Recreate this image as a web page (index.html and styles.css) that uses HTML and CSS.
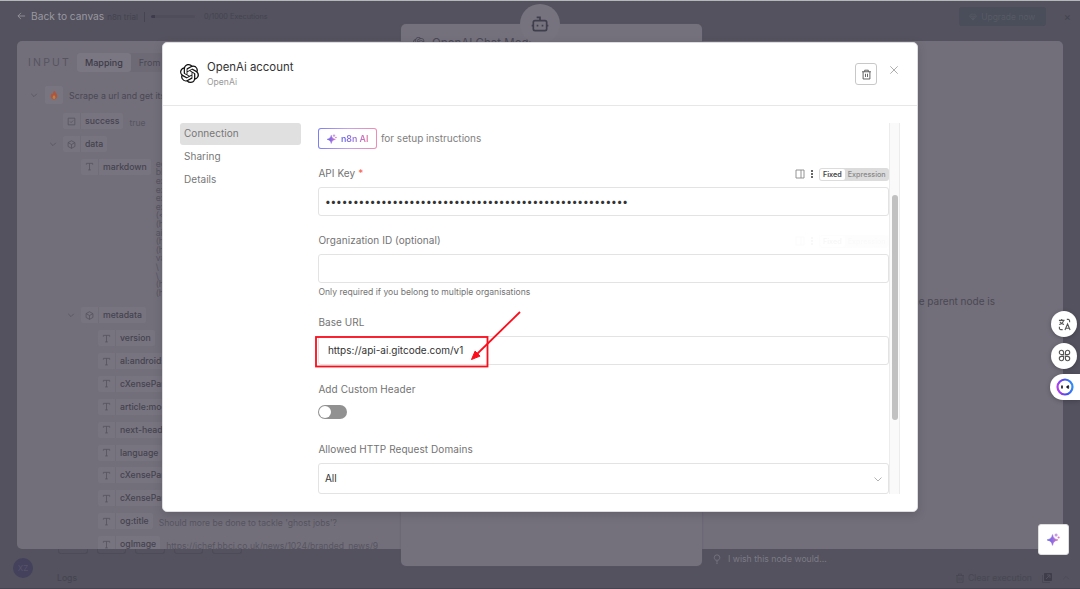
FILE: index.html
```html
<!DOCTYPE html>
<html lang="en">
<head>
    <meta charset="UTF-8">
    <meta name="viewport" content="width=device-width, initial-scale=1.0">
    <title>OpenAi account</title>
    <link rel="stylesheet" href="styles.css">
</head>
<body>

    <!-- shared icons -->
    <svg class="sprite" aria-hidden="true">
        <defs>
            <linearGradient id="aiGradient" x1="0" y1="0" x2="1" y2="0">
                <stop offset="0" stop-color="#5b60e8"/>
                <stop offset="0.6" stop-color="#a06fdc"/>
                <stop offset="1" stop-color="#d268b4"/>
            </linearGradient>
            <linearGradient id="ringGradient" x1="0" y1="0.6" x2="1" y2="0.4">
                <stop offset="0" stop-color="#b43cf0"/>
                <stop offset="0.5" stop-color="#4a48ee"/>
                <stop offset="1" stop-color="#2f8df5"/>
            </linearGradient>
        </defs>
        <symbol id="openai" viewBox="0 0 24 24"><path fill="currentColor" d="M22.2819 9.8211a5.9847 5.9847 0 0 0-.5157-4.9108 6.0462 6.0462 0 0 0-6.5098-2.9A6.0651 6.0651 0 0 0 4.9807 4.1818a5.9847 5.9847 0 0 0-3.9977 2.9 6.0462 6.0462 0 0 0 .7427 7.0966 5.98 5.98 0 0 0 .511 4.9107 6.051 6.051 0 0 0 6.5146 2.9001A5.9847 5.9847 0 0 0 13.2599 24a6.0557 6.0557 0 0 0 5.7718-4.2058 5.9894 5.9894 0 0 0 3.9977-2.9001 6.0557 6.0557 0 0 0-.7475-7.0729zm-9.022 12.6081a4.4755 4.4755 0 0 1-2.8764-1.0408l.1419-.0804 4.7783-2.7582a.7948.7948 0 0 0 .3927-.6813v-6.7369l2.02 1.1686a.071.071 0 0 1 .038.052v5.5826a4.504 4.504 0 0 1-4.4945 4.4944zm-9.6607-4.1254a4.4708 4.4708 0 0 1-.5346-3.0137l.142.0852 4.783 2.7582a.7712.7712 0 0 0 .7806 0l5.8428-3.3685v2.3324a.0804.0804 0 0 1-.0332.0615L9.74 19.9502a4.4992 4.4992 0 0 1-6.1408-1.6464zM2.3408 7.8956a4.485 4.485 0 0 1 2.3655-1.9728V11.6a.7664.7664 0 0 0 .3879.6765l5.8144 3.3543-2.0201 1.1685a.0757.0757 0 0 1-.071 0l-4.8303-2.7865A4.504 4.504 0 0 1 2.3408 7.872zm16.5963 3.8558L13.1038 8.364 15.1192 7.2a.0757.0757 0 0 1 .071 0l4.8303 2.7913a4.4944 4.4944 0 0 1-.6765 8.1042v-5.6772a.79.79 0 0 0-.407-.667zm2.0107-3.0231l-.142-.0852-4.7735-2.7818a.7759.7759 0 0 0-.7854 0L9.409 9.2297V6.8974a.0662.0662 0 0 1 .0284-.0615l4.8303-2.7866a4.4992 4.4992 0 0 1 6.6802 4.66zM8.3065 12.863l-2.02-1.1638a.0804.0804 0 0 1-.038-.0567V6.0742a4.4992 4.4992 0 0 1 7.3757-3.4537l-.142.0805L8.704 5.459a.7948.7948 0 0 0-.3927.6813zm1.0976-2.3654l2.602-1.4998 2.6069 1.4998v2.9994l-2.5974 1.4997-2.6067-1.4997Z"/></symbol>
        <symbol id="text" viewBox="0 0 10 10"><path class="line" d="M1.5 3V1.5h7V3M5 1.5v7.3M3.5 8.8h3"/></symbol>
        <symbol id="cube" viewBox="0 0 10 10"><path class="line" d="M5 .8l3.8 2.1v4.3L5 9.3 1.2 7.2V2.9zM1.2 2.9L5 5l3.8-2.1M5 5v4.3"/></symbol>
        <symbol id="check" viewBox="0 0 10 10"><path class="line" d="M1.3 1.3h7.4v7.4H1.3zM3.4 5l1.2 1.2 2.2-2.3"/></symbol>
        <symbol id="chevron" viewBox="0 0 10 10"><path class="line" d="M1.5 3.5L5 7l3.5-3.5"/></symbol>
        <symbol id="panel" viewBox="0 0 10 10"><path class="line" d="M1 1h8v8H1zM6 1v8"/></symbol>
        <symbol id="sparkle" viewBox="0 0 16 16">
            <path fill="url(#aiGradient)" d="M6.800 2C7.800 6 9 7.200 13.400 8.500 9 9.800 7.800 11 6.800 15.200 5.800 11 4.600 9.800.2 8.500 4.600 7.200 5.800 6 6.800 2z" stroke="url(#aiGradient)" stroke-width="0.8" stroke-linejoin="round"/>
            <circle cx="11.200" cy="2.500" r="1.900" fill="#c79be6"/>
            <circle cx="14.300" cy="5.500" r="1.300" fill="#d67fc0"/>
        </symbol>
    </svg>

    <!-- top bar behind the dialog -->
    <header class="topbar">
        <div class="back">
            <svg viewBox="0 0 10 10"><path class="line" d="M9 5H1M4.5 1.5L1 5l3.5 3.5"/></svg>
            Back to canvas
        </div>
        <div class="trial">n8n trial</div>
        <div class="usage"></div>
        <div class="executions">0/1000 Executions</div>
        <div class="upgrade">
            <svg viewBox="0 0 10 10"><path class="line" d="M2.5 1.5h5L9.3 4 5 9 .7 4zM.7 4h8.6M3.4 4L5 9l1.6-5"/></svg>
            Upgrade now
        </div>
        <div class="dismiss">×</div>
    </header>

    <!-- node detail view -->
    <main class="ndv">
        <section class="input-panel">
            <div class="input-head">
                <h3>INPUT</h3>
                <div class="tabs"><span class="tab active">Mapping</span><span class="tab">From AI</span></div>
            </div>
            <div class="source">
                <svg class="arrow"><use href="#chevron"/></svg>
                <span class="flame"><svg viewBox="0 0 10 10"><path fill="#b0553a" d="M5.4.5c.2 2 2.9 3 2.9 5.6C8.300 8.200 6.900 9.500 5 9.500S1.700 8.200 1.700 6.200c0-1.400.7-2.300 1.400-2.900.1.700.3 1.100.8 1.300C3.900 3 4.300 1.500 5.400.5z"/><path fill="#b98248" d="M5 5c1 1 1.400 1.700 1.400 2.500S5.800 9 5 9s-1.400-.6-1.400-1.400S4.200 6 5 5z"/></svg></span>
                Scrape a url and get its content
            </div>
            <div class="tree">
                <div class="row"><span class="pill"><svg><use href="#check"/></svg><b>success</b></span><span class="value">true</span></div>
                <div class="row"><svg class="arrow"><use href="#chevron"/></svg><span class="pill"><svg><use href="#cube"/></svg><b>data</b></span></div>
                <div class="row level-2 tall"><span class="pill"><svg><use href="#text"/></svg><b>markdown</b></span>
                    <span class="markdown">ec<br>bb<br>ex<br>ex<br>ex<br>ex<br>(&lt;<br>(h<br>ai<br>(h<br>(h<br>va<br>\<br>\<br>(h<br>(h</span></div>
                <div class="row level-2"><svg class="arrow"><use href="#chevron"/></svg><span class="pill"><svg><use href="#cube"/></svg><b>metadata</b></span></div>
                <div class="row level-3"><span class="pill"><svg><use href="#text"/></svg><b>version</b></span></div>
                <div class="row level-3"><span class="pill"><svg><use href="#text"/></svg><b>al:android:url</b></span></div>
                <div class="row level-3"><span class="pill"><svg><use href="#text"/></svg><b>cXenseParse</b></span></div>
                <div class="row level-3"><span class="pill"><svg><use href="#text"/></svg><b>article:modified</b></span></div>
                <div class="row level-3"><span class="pill"><svg><use href="#text"/></svg><b>next-head</b></span></div>
                <div class="row level-3"><span class="pill"><svg><use href="#text"/></svg><b>language</b></span></div>
                <div class="row level-3"><span class="pill"><svg><use href="#text"/></svg><b>cXenseParse</b></span></div>
                <div class="row level-3"><span class="pill"><svg><use href="#text"/></svg><b>cXenseParse</b></span></div>
                <div class="row level-3"><span class="pill"><svg><use href="#text"/></svg><b>og:title</b></span><span class="value">Should more be done to tackle 'ghost jobs'?</span></div>
                <div class="row level-3"><span class="pill"><svg><use href="#text"/></svg><b>ogImage</b></span><span class="value">https://ichef.bbci.co.uk/news/1024/branded_news/9</span></div>
            </div>
        </section>

        <section class="node-panel">
            <div class="node-badge">
                <svg viewBox="0 0 24 24"><path d="M12 8V4H8M2 14h2M20 14h2M15 13v2M9 13v2"/><rect x="4" y="8" width="16" height="12" rx="2"/></svg>
            </div>
            <div class="node-title"><svg><use href="#openai"/></svg>OpenAI Chat Model</div>
        </section>

        <section class="output-panel">
            <p>Output will show here once the parent node is</p>
        </section>
    </main>

    <footer class="bottombar">
        <span class="canvas-buttons"><i></i><i></i><i></i><i></i><i></i></span>
        <span class="avatar">XZ</span>
        <span class="logs">Logs</span>
        <span class="wish"><svg viewBox="0 0 10 12"><path class="line" d="M3.600 7.500C2 6.500 1.700 5.500 1.700 4.300a3.300 3.300 0 0 1 6.600 0c0 1.200-.3 2.200-1.900 3.200zM3.700 9.500h2.600M4.200 11.300h1.600"/></svg>I wish this node would...</span>
        <span class="clear">
            <svg viewBox="0 0 10 10"><path class="line" d="M1 2.500h8M2 2.500v6.800h6V2.500M3.500 2.500V1h3v1.500M4 4.500v3M6 4.500v3"/></svg>
            Clear execution
            <svg class="popout" viewBox="0 0 10 10"><rect x="2" y="0" width="8" height="8" rx="1"/><path class="line" d="M.5 2v7.500H8"/><path class="mark" d="M4 6l4-4M5 2h3v3"/></svg>
            <svg class="up"><use href="#chevron"/></svg>
        </span>
    </footer>

    <!-- credential dialog -->
    <div class="modal">
        <div class="modal-head">
            <svg class="logo"><use href="#openai"/></svg>
            <div class="names">
                <h1>OpenAi account</h1>
                <p>OpenAi</p>
            </div>
            <button class="trash"><svg viewBox="0 0 12 12"><path d="M1.200 3h9.600M2.300 3v7.900h7.400V3M4 3V1.300h4V3M4.900 5.200v3.500M7.100 5.200v3.500"/></svg></button>
            <button class="close"><svg viewBox="0 0 10 10"><path d="M1.300 1.300l7.400 7.400M8.700 1.300L1.300 8.700"/></svg></button>
        </div>

        <div class="modal-body">
            <nav>
                <a class="current">Connection</a>
                <a>Sharing</a>
                <a>Details</a>
            </nav>

            <div class="form">
                <div class="setup">
                    <span class="ai-button"><svg><use href="#sparkle"/></svg><span>n8n AI</span></span>
                    <span class="setup-text">for setup instructions</span>
                </div>

                <div class="label">API Key <em>*</em>
                    <div class="options"><svg><use href="#panel"/></svg><i class="dots"></i><span class="switch"><b>Fixed</b>Expression</span></div>
                </div>
                <div class="field password">••••••••••••••••••••••••••••••••••••••••••••••••••••••</div>

                <div class="label">Organization ID (optional)
                    <div class="options ghost"><svg><use href="#panel"/></svg><i class="dots"></i><span class="switch"><b>Fixed</b>Expression</span></div>
                </div>
                <div class="field"></div>
                <div class="hint">Only required if you belong to multiple organisations</div>

                <div class="label">Base URL</div>
                <div class="field url">https://api-ai.gitcode.com/v1
                    <svg class="marker" viewBox="0 0 208 58">
                        <rect x="1" y="26" width="171.500" height="29.500"/>
                        <path d="M205 1L161 44"/>
                        <path class="tip" d="M156.500 48.500l3.600-8.400 4.900 5z"/>
                    </svg>
                </div>

                <div class="label">Add Custom Header</div>
                <div class="toggle"></div>

                <div class="label domains">Allowed HTTP Request Domains</div>
                <div class="field select">All<svg><use href="#chevron"/></svg></div>
            </div>

            <div class="scrollbar"><i></i></div>
        </div>
    </div>

    <!-- floating tools -->
    <aside class="tools">
        <span class="round"><svg viewBox="0 0 14 14"><path d="M1 2.500h6M4 1v1.500M2 4c1 1.500 2.500 2.500 4.500 3M6 2.500C5.500 4.500 4 6.500 1.300 7M9.500 1.500h1.500a1.500 1.500 0 0 1 1.500 1.500v1.500M1.500 9.500V11A1.500 1.500 0 0 0 3 12.500h2M7.500 13l2.800-6.500L13 13M8.400 11h3.800"/></svg></span>
        <span class="round"><svg viewBox="0 0 14 14"><path d="M6 6H3.700A2.300 2.300 0 1 1 6 3.700zM8 6V3.700A2.300 2.300 0 1 1 10.300 6zM6 8v2.300A2.300 2.300 0 1 1 3.700 8zM8 8h2.300A2.300 2.300 0 1 1 8 10.300z"/></svg></span>
        <span class="bot"><svg viewBox="0 0 18 18"><circle cx="9" cy="9" r="7.500" fill="none" stroke="url(#ringGradient)" stroke-width="2.200"/><path d="M6 7.500v3M12.800 7.600L11.200 9l1.600 1.400" fill="none" stroke="#18182a" stroke-width="1.700"/></svg></span>
    </aside>
    <div class="assistant"><svg><use href="#sparkle"/></svg></div>

</body>
</html>
```
FILE: styles.css
```css
* {
    box-sizing: border-box;
}

body {
    margin: 0;
    width: 1080px;
    height: 589px;
    overflow: hidden;
    position: relative;
    background: #53525e;
    border-top: 1px solid #b3b8b8;
    font-family: Inter, "Liberation Sans", sans-serif;
    font-size: 10px;
    color: #4a4854;
}

h1, h3, p {
    margin: 0;
    font-weight: 400;
}

svg {
    flex: none;
    width: 10px;
    height: 10px;
}

.sprite {
    position: absolute;
    width: 0;
    height: 0;
}

.line {
    fill: none;
    stroke: currentColor;
    stroke-width: 0.9;
}

/* top bar */
.topbar {
    height: 23px;
    padding: 8px 9px 0 17px;
    display: flex;
    align-items: center;
    font-size: 7.3px;
    color: #444350;
}

.back {
    display: flex;
    align-items: center;
    gap: 5px;
    margin-top: -2px;
    font-size: 10.2px;
    color: #9a98a1;
}

.back svg {
    width: 9px;
}

.trial {
    margin-left: 3px;
    padding-right: 6px;
    border-right: 1px solid #454450;
    font-size: 8px;
}

.usage {
    width: 44px;
    height: 3px;
    margin: 0 9px 0 6px;
    border-radius: 2px;
    background: linear-gradient(to right, #3e3c4c 4px, #4e4d59 4px);
}

.upgrade {
    display: flex;
    align-items: center;
    justify-content: center;
    gap: 4px;
    width: 87px;
    height: 19px;
    margin-left: auto;
    border-radius: 3px;
    background: #494e5a;
    color: #585a65;
    font-size: 8.5px;
}

.upgrade svg {
    width: 8px;
}

.dismiss {
    margin: 0 0 0 18px;
    font-size: 11px;
}

/* node detail view */
.ndv {
    display: flex;
    height: 543px;
    padding-left: 17px;
}

.input-panel,
.output-panel {
    height: 508px;
    margin-top: 17px;
    background: #726f7a;
    overflow: hidden;
}

.input-panel {
    width: 384px;
    border-radius: 5px 0 0 5px;
}

.output-panel {
    width: 361px;
    border-radius: 0 5px 0 0;
}

.output-panel p {
    width: 293px;
    margin-top: 254px;
    text-align: right;
    white-space: nowrap;
    font-size: 10px;
}

.node-panel {
    width: 301px;
    height: 542px;
    background: #74717c;
    border-radius: 5px;
    box-shadow: 0 0 2px #5c5a66;
    position: relative;
}

.node-badge {
    position: absolute;
    left: 119px;
    top: -20px;
    width: 40px;
    height: 40px;
    border-radius: 50%;
    background: #76737e;
    display: flex;
    align-items: center;
    justify-content: center;
}

.node-badge svg {
    width: 20px;
    height: 20px;
    fill: none;
    stroke: #3f3e4c;
    stroke-width: 2;
}

.node-title {
    display: flex;
    align-items: center;
    gap: 7px;
    padding: 12px 12px 0;
    font-size: 11.5px;
    line-height: 14px;
}

.node-title svg {
    width: 12px;
    height: 12px;
}

.input-head {
    display: flex;
    align-items: center;
    padding: 12px 0 0 11px;
}

.input-head h3 {
    width: 49px;
    font-size: 10.5px;
    letter-spacing: 2.2px;
    color: #565460;
}

.tabs {
    display: flex;
    width: 150px;
    border-radius: 3px;
    background: #6d6a75;
}

.tab {
    padding: 0 8px;
    line-height: 19px;
    font-size: 9px;
}

.tab.active {
    padding: 0 8px;
    border-radius: 3px;
    background: #7a7782;
    color: #3d3b48;
    font-weight: 500;
}

.source {
    display: flex;
    align-items: center;
    height: 18px;
    margin: 14px 0 6px 13px;
    font-size: 8.8px;
    white-space: nowrap;
}

.arrow {
    width: 8px;
    height: 8px;
    color: #52505c;
}

.flame {
    display: flex;
    align-items: center;
    justify-content: center;
    width: 18px;
    height: 18px;
    margin: 0 6px 0 7px;
    border-radius: 2px;
    background: #787580;
}

.row {
    display: flex;
    align-items: center;
    height: 22.9px;
    padding-left: 46px;
    position: relative;
    white-space: nowrap;
}

.row .arrow {
    margin: 0 6px 0 -14px;
}

.level-2 {
    padding-left: 64px;
}

.level-3 {
    padding-left: 81px;
}

.tall {
    height: 148px;
    align-items: flex-start;
    padding-top: 3px;
}

.pill {
    display: flex;
    align-items: center;
    height: 16px;
    border-radius: 2px;
    background: #77747f;
}

.pill svg {
    width: 17px;
    height: 9px;
    color: #55535f;
}

.pill b {
    border-left: 1px solid #706d78;
    padding: 0 4px;
    font-size: 8.7px;
    line-height: 16px;
    font-weight: 500;
    color: #454350;
}

.value {
    margin: 3px 0 0 6px;
    font-size: 8.6px;
    line-height: 12px;
    color: #575561;
}

.markdown {
    margin: 1px 0 0 5px;
    font-size: 8.6px;
    line-height: 8.6px;
    color: #565460;
}

/* bottom strip */
.bottombar {
    position: absolute;
    left: 0;
    right: 0;
    bottom: 0;
    height: 40px;
    border-bottom: 1px solid #454450;
    color: #444350;
    font-size: 8.7px;
}

.bottombar > span {
    position: absolute;
    display: flex;
    align-items: center;
}

.bottombar .canvas-buttons {
    left: 58px;
    top: 0;
    gap: 9px;
}

.canvas-buttons i {
    width: 29.5px;
    height: 5px;
    border: 1px solid #4c4b57;
    border-top: 0;
    border-radius: 0 0 3px 3px;
}

.bottombar .avatar {
    left: 13px;
    top: 9px;
    width: 20px;
    height: 20px;
    justify-content: center;
    border-radius: 50%;
    background: #43415c;
    color: #55536b;
    font-size: 8px;
}

.bottombar .logs {
    left: 57px;
    top: 24px;
}

.bottombar .wish {
    left: 712px;
    top: 5px;
    gap: 6px;
    color: #7d7b86;
}

.bottombar .clear {
    right: 10px;
    top: 24px;
    gap: 3px;
    color: #484753;
}

.popout {
    margin: 0 7px;
    fill: #3e3d49;
}

.popout .mark {
    fill: none;
    stroke: #53525e;
}

.up {
    transform: rotate(180deg);
    width: 8px;
}

/* credential dialog */
.modal {
    position: absolute;
    left: 162px;
    top: 41px;
    width: 756px;
    height: 470px;
    border-radius: 5px;
    border: 1px solid #dddce0;
    background: #fff;
    box-shadow: 0 3px 9px rgba(50, 48, 60, 0.25);
}

.modal-head {
    display: flex;
    height: 63px;
    padding: 0 18px 0 17px;
    border-bottom: 1px solid #e7e7e7;
}

.logo {
    width: 19px;
    height: 19px;
    margin: 21px 8px 0 0;
    color: #111;
}

.names {
    flex: 1;
    padding-top: 17px;
}

.names h1 {
    font-size: 11.4px;
    line-height: 15px;
    color: #333;
}

.names p {
    margin-top: 1px;
    font-size: 8.6px;
    line-height: 13px;
    color: #999;
}

.modal button {
    display: flex;
    align-items: center;
    justify-content: center;
    padding: 0;
    border: 0;
    background: none;
}

.modal button svg {
    fill: none;
    stroke: #555;
}

.modal .trash {
    width: 22px;
    height: 22px;
    margin: 20px 12px 0 0;
    border: 1px solid #c8c8c8;
    border-radius: 3px;
}

.trash svg {
    width: 11px;
    height: 11px;
}

.modal .close {
    width: 10px;
    height: 10px;
    margin-top: 22px;
}

.modal .close svg {
    stroke: #999;
    stroke-width: 0.8;
}

.modal-body {
    display: flex;
    height: 371px;
    margin: 17px 17px 0;
}

nav {
    width: 121px;
    margin-right: 17.4px;
}

nav a {
    display: block;
    height: 22px;
    margin-bottom: 1px;
    padding-left: 4px;
    border-radius: 3px;
    font-size: 10px;
    line-height: 21px;
    letter-spacing: 0.04px;
    color: #777;
}

nav .current {
    background: #e0e0e0;
}

.form {
    width: 570.6px;
    color: #737373;
}

.setup {
    display: flex;
    align-items: center;
    gap: 4px;
    height: 21px;
    margin: 5px 0 18px;
    color: #808080;
}

.setup-text {
    line-height: 20px;
    margin-bottom: 1px;
}

.ai-button {
    display: flex;
    align-items: center;
    justify-content: center;
    gap: 4px;
    width: 58.5px;
    height: 21px;
    border: 1px solid transparent;
    border-radius: 3px;
    background: linear-gradient(#fff, #fff) padding-box, linear-gradient(90deg, #7c7ff0, #c4a4ea 50%, #f08bb4) border-box;
    font-size: 8.8px;
    font-weight: 600;
}

.ai-button span {
    background: linear-gradient(90deg, #6567ea, #a678d8 60%, #e2709f);
    -webkit-background-clip: text;
    background-clip: text;
    color: transparent;
}

.label {
    display: flex;
    height: 14px;
    margin-bottom: 6px;
    font-size: 10px;
    line-height: 13px;
    letter-spacing: 0.07px;
}

.label em {
    margin-left: 3px;
    font-style: normal;
    color: #f5604f;
}

.options {
    display: flex;
    align-items: center;
    margin-left: auto;
    color: #888;
    letter-spacing: 0;
}

.dots {
    width: 2px;
    height: 8px;
    margin: 0 6px 0 6px;
    background: repeating-linear-gradient(#666 0 2px, transparent 2px 3px);
}

.switch {
    display: flex;
    align-items: center;
    width: 70px;
    height: 13px;
    padding: 0 1px;
    border-radius: 3px;
    background: #dcdcdc;
    font-size: 7.2px;
    font-weight: 500;
}

.switch b {
    margin-right: 3px;
    padding: 0 3px;
    border-radius: 2px;
    background: #fff;
    color: #444;
    line-height: 11px;
    font-weight: 600;
}

.ghost {
    opacity: 0.04;
}

.field {
    position: relative;
    height: 29px;
    margin-bottom: 18px;
    padding-left: 5.5px;
    border: 1px solid #e3e3e3;
    border-radius: 3px;
    font-size: 10px;
    line-height: 27px;
    color: #333;
}

.password {
    font-size: 10.2px;
    letter-spacing: -0.12px;
}

.hint {
    height: 12px;
    margin: -15px 0 18px;
    font-size: 8.6px;
    line-height: 12px;
}

.url {
    padding-left: 8.5px;
}

/* red frame and arrow over the url */
.marker {
    position: absolute;
    left: -4.5px;
    top: -26px;
    width: 208px;
    height: 58px;
    fill: none;
    stroke: #fb0d1b;
    stroke-width: 1.8;
}

.marker .tip {
    fill: #fb0d1b;
    stroke-width: 1;
}

.toggle {
    width: 29px;
    height: 14px;
    margin: 8px 0 24px;
    padding: 1px;
    border-radius: 7px;
    background: #919191;
}

.toggle::before {
    content: "";
    display: block;
    width: 12px;
    height: 12px;
    border-radius: 50%;
    background: #fff;
}

.select {
    display: flex;
    justify-content: space-between;
    align-items: center;
    height: 31px;
    margin: 0;
    padding-right: 5px;
}

.select svg {
    color: #aaa;
}

.scrollbar {
    width: 11px;
    border: 1px solid #ececec;
    border-width: 0 1px;
    background: #fafafa;
}

.scrollbar i {
    display: block;
    width: 6px;
    height: 225px;
    margin: 72px 0 0 2px;
    border-radius: 3px;
    background: #c1c1c1;
}

/* floating tools on the right edge */
.tools {
    position: absolute;
    right: 0;
    top: 310px;
    width: 30.5px;
    display: flex;
    flex-direction: column;
    gap: 5.5px;
}

.round,
.bot {
    display: flex;
    align-items: center;
    justify-content: center;
    height: 26px;
    background: #fff;
    box-shadow: 0 1px 4px rgba(40, 38, 50, 0.4);
}

.round {
    width: 26px;
    margin-left: 1.5px;
    border-radius: 50%;
}

.round svg {
    width: 13px;
    height: 13px;
    fill: none;
    stroke: #555;
    stroke-width: 1.2;
}

.bot {
    border-radius: 13px 0 0 13px;
}

.bot svg {
    width: 18px;
    height: 18px;
}

.assistant {
    position: absolute;
    left: 1038px;
    top: 523px;
    width: 31px;
    height: 31px;
    display: flex;
    align-items: center;
    justify-content: center;
    border: 1px solid #ddd;
    border-radius: 3px;
    background: #fff;
}

.assistant svg {
    width: 13px;
    height: 13px;
}
```
